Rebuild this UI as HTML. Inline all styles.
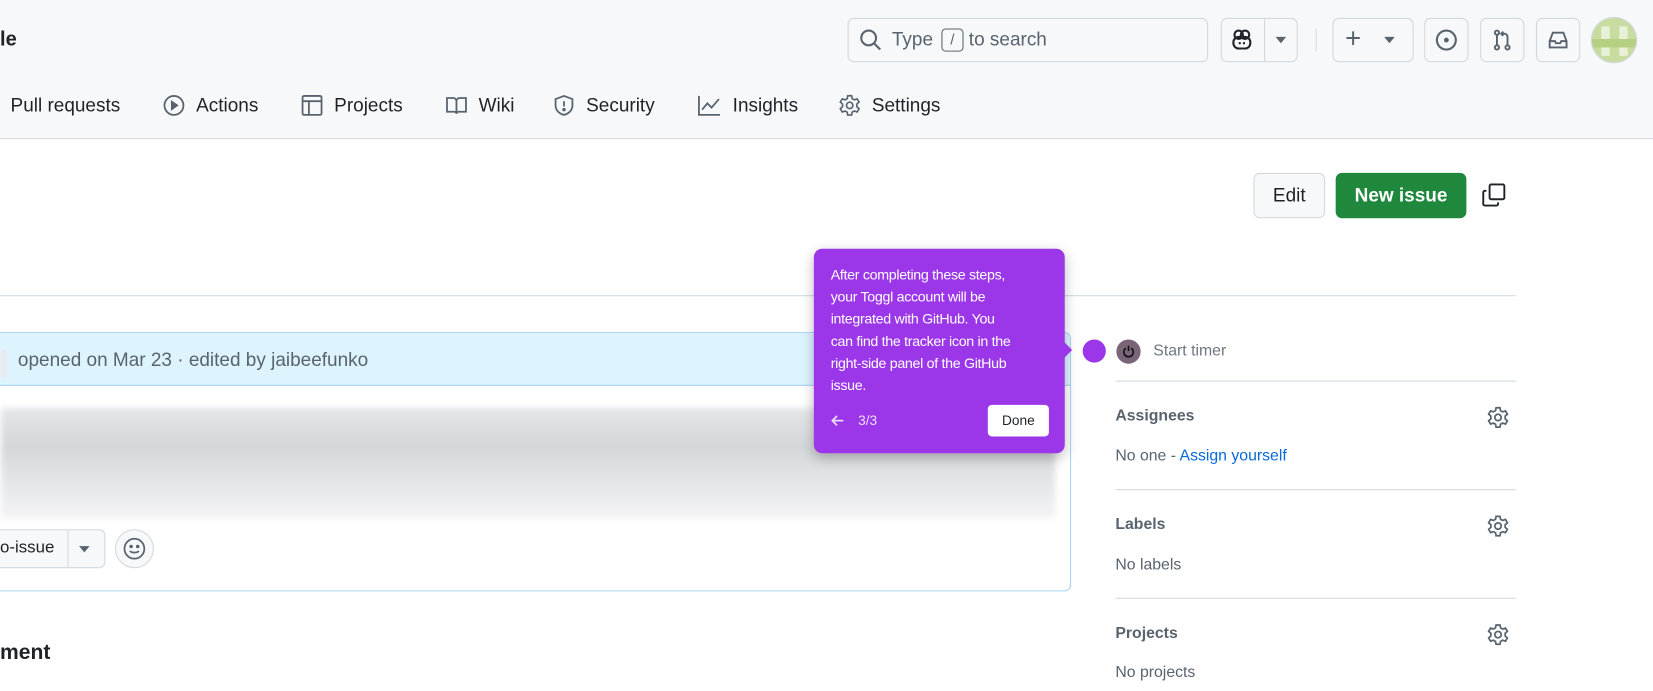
<!DOCTYPE html>
<html><head><meta charset="utf-8"><style>
*{box-sizing:border-box;margin:0;padding:0}
html,body{width:1653px;height:690px;overflow:hidden;background:#fff;font-family:"Liberation Sans",sans-serif;color:#1f2328}
#w{position:absolute;left:0;top:0;width:1568px;height:655px;transform:scale(1.0542);transform-origin:0 0}
.a{position:absolute}
.hdr{left:0;top:0;width:1568px;height:132px;background:#f6f8fa;border-bottom:1px solid #d1d9e0}
.btn{position:absolute;border:1px solid #d1d9e0;border-radius:6px;background:#f6f8fa}
.nav{position:absolute;top:89px;font-size:18px;color:#1f2328;display:flex;align-items:center;gap:10px}
svg{display:block}
.sb{position:absolute;left:1058px;width:380px;font-size:15px}
.sb h{font-weight:bold;color:#59636e}
.line{position:absolute;left:1058px;width:380px;height:1px;background:#d1d9e0}
</style></head><body><div id="w">
<div class="a hdr"></div>
<div class="a" style="left:0;top:27px;font-size:19px;font-weight:bold">le</div>
<div class="btn" style="left:804px;top:17px;width:342px;height:42px;background:#f6f8fa"></div>
<svg class="a" style="left:815px;top:27px" width="22" height="22" viewBox="0 0 22 22" fill="none" stroke="#59636e" stroke-width="2"><circle cx="9" cy="9" r="7"/><path d="M14 14l6 6"/></svg>
<div class="a" style="left:846px;top:27px;font-size:18px;color:#59636e">Type</div>
<div class="a" style="left:893px;top:27px;width:21px;height:22px;border:1.5px solid #59636e;border-radius:4px;font-size:14px;color:#59636e;text-align:center;line-height:19px">/</div>
<div class="a" style="left:919px;top:27px;font-size:18px;color:#59636e">to search</div>
<div class="btn" style="left:1158px;top:17px;width:73px;height:42px"></div>
<div class="a" style="left:1199px;top:17px;width:1px;height:42px;background:#d1d9e0"></div>
<svg class="a" style="left:1167px;top:27px" width="22" height="22" viewBox="0 0 22 22" fill="none" stroke="#1f2328" stroke-width="2"><rect x="3" y="8" width="16" height="11" rx="5"/><circle cx="8" cy="6" r="4"/><circle cx="14" cy="6" r="4"/><path d="M9 13v2M13 13v2"/></svg>
<div class="a" style="left:1210px;top:35px;border:5px solid transparent;border-top:6px solid #59636e"></div>
<div class="a" style="left:1248px;top:27px;width:1px;height:22px;background:#d1d9e0"></div>
<div class="btn" style="left:1264px;top:17px;width:77px;height:42px"></div>
<div class="a" style="left:1276px;top:21px;font-size:26px;color:#59636e">+</div>
<div class="a" style="left:1313px;top:35px;border:5px solid transparent;border-top:6px solid #59636e"></div>
<div class="btn" style="left:1351px;top:17px;width:42px;height:42px"></div>
<svg class="a" style="left:1361px;top:27px" width="22" height="22" viewBox="0 0 22 22" fill="none" stroke="#59636e" stroke-width="2"><circle cx="11" cy="11" r="9"/><circle cx="11" cy="11" r="1.3" fill="#59636e"/></svg>
<div class="btn" style="left:1404px;top:17px;width:42px;height:42px"></div>
<svg class="a" style="left:1414px;top:27px" width="22" height="22" viewBox="0 0 22 22" fill="none" stroke="#59636e" stroke-width="1.8"><circle cx="6" cy="4" r="2"/><circle cx="6" cy="18" r="2"/><circle cx="16" cy="18" r="2"/><path d="M6 6v10M16 16V8a3 3 0 0 0-3-3h-3M12 3l-2 2 2 2"/></svg>
<div class="btn" style="left:1457px;top:17px;width:42px;height:42px"></div>
<svg class="a" style="left:1467px;top:27px" width="22" height="22" viewBox="0 0 22 22" fill="none" stroke="#59636e" stroke-width="1.8"><path d="M3 12l3-8h10l3 8v6H3z M3 12h5l1 2h4l1-2h5"/></svg>
<div class="a" style="left:1509px;top:16px;width:44px;height:44px;border-radius:50%;overflow:hidden;border:1px solid #d1d9e0;background:#c8dca0">
<div class="a" style="left:9px;top:8px;width:8px;height:28px;background:#e8f0d8"></div><div class="a" style="left:26px;top:8px;width:8px;height:28px;background:#e8f0d8"></div><div class="a" style="left:0;top:20px;width:44px;height:8px;background:#b5d080"></div></div>
<div class="nav" style="left:10px;top:90px">Pull requests</div>
<div class="nav" style="left:154px"><svg width="22" height="22" viewBox="0 0 22 22" fill="none" stroke="#59636e" stroke-width="1.7"><circle cx="11" cy="11" r="9"/><path d="M9 7.5v7l5-3.5z" fill="#59636e"/></svg>Actions</div>
<div class="nav" style="left:285px"><svg width="22" height="22" viewBox="0 0 22 22" fill="none" stroke="#59636e" stroke-width="1.7"><rect x="2" y="2" width="18" height="18" rx="1.5"/><path d="M2 7h18M8 7v13"/></svg>Projects</div>
<div class="nav" style="left:422px"><svg width="22" height="22" viewBox="0 0 22 22" fill="none" stroke="#59636e" stroke-width="1.7"><path d="M2 4h6a3 3 0 0 1 3 3v12a2 2 0 0 0-2-2H2zM20 4h-6a3 3 0 0 0-3 3v12a2 2 0 0 1 2-2h7z"/></svg>Wiki</div>
<div class="nav" style="left:524px"><svg width="22" height="22" viewBox="0 0 22 22" fill="none" stroke="#59636e" stroke-width="1.7"><path d="M11 2l8 3v6c0 5-4 8-8 9-4-1-8-4-8-9V5z M11 7v5"/><circle cx="11" cy="15" r=".8" fill="#59636e"/></svg>Security</div>
<div class="nav" style="left:661px"><svg width="24" height="22" viewBox="0 0 24 22" fill="none" stroke="#59636e" stroke-width="1.7"><path d="M2 2v18h20M5 15l5-6 4 4 7-8"/></svg>Insights</div>
<div class="nav" style="left:795px"><svg width="22" height="22" viewBox="0 0 24 24" fill="none" stroke="#59636e" stroke-width="1.7"><path d="M10 2h4l.6 3 2.2 1.2 2.9-1 2 3.4-2.3 2v2.8l2.3 2-2 3.4-2.9-1-2.2 1.2-.6 3h-4l-.6-3-2.2-1.2-2.9 1-2-3.4 2.3-2v-2.8l-2.3-2 2-3.4 2.9 1L9.4 5z"/><circle cx="12" cy="12" r="3.3"/></svg>Settings</div>
<div class="btn" style="left:1189px;top:164px;width:68px;height:43px;font-size:18px;text-align:center;line-height:41px">Edit</div>
<div class="a" style="left:1267px;top:164px;width:124px;height:43px;background:#1f883d;border-radius:6px;color:#fff;font-size:18px;font-weight:bold;text-align:center;line-height:43px">New issue</div>
<svg class="a" style="left:1405px;top:173px" width="24" height="24" viewBox="0 0 24 24" fill="none" stroke="#1f2328" stroke-width="1.8"><rect x="8" y="2" width="14" height="14" rx="1.5"/><path d="M5 8H3.5A1.5 1.5 0 0 0 2 9.5v11A1.5 1.5 0 0 0 3.5 22h11a1.5 1.5 0 0 0 1.5-1.5V19"/></svg>
<div class="a" style="left:0;top:280px;width:1438px;height:1px;background:#d1d9e0"></div>
<div class="a" style="left:-10px;top:315px;width:1026px;height:246px;border:1px solid #a6d3f2;border-radius:6px;overflow:hidden">
<div class="a" style="left:0;top:0;width:1026px;height:50px;background:#ddf4ff;border-bottom:1px solid #a6d3f2"></div>
<div class="a" style="left:10px;top:16px;width:5px;height:26px;background:#e8eaed"></div>
<div class="a" style="left:26px;top:15px;font-size:18px;color:#59636e">opened on Mar 23 · edited by jaibeefunko</div>
<div class="a" style="left:10px;top:71px;width:1000px;height:105px;background:linear-gradient(180deg,#e4e6e8,#d4d7da 35%,#e6e7e9 70%,#f4f4f5);filter:blur(3px)"></div>
</div>
<div class="a" style="left:-10px;top:502px;width:110px;height:37px;border:1px solid #d1d9e0;border-radius:6px;background:#f6f8fa"></div>
<div class="a" style="left:0;top:511px;font-size:16px">o-issue</div>
<div class="a" style="left:64px;top:503px;width:1px;height:35px;background:#d1d9e0"></div>
<div class="a" style="left:75px;top:518px;border:5px solid transparent;border-top:6px solid #59636e"></div>
<div class="a" style="left:109px;top:502px;width:37px;height:37px;border:1px solid #d1d9e0;border-radius:50%;background:#f6f8fa"></div>
<svg class="a" style="left:116px;top:509px" width="23" height="23" viewBox="0 0 22 22" fill="none" stroke="#59636e" stroke-width="1.6"><circle cx="11" cy="11" r="9"/><path d="M7 13c1 2 7 2 8 0"/><circle cx="8" cy="9" r=".8" fill="#59636e"/><circle cx="14" cy="9" r=".8" fill="#59636e"/></svg>
<div class="a" style="left:0;top:608px;font-size:20px;font-weight:bold">ment</div>
<div class="a" style="left:1059px;top:322px;width:23px;height:23px;border-radius:50%;background:#7a6477"></div>
<svg class="a" style="left:1064px;top:327px" width="13" height="13" viewBox="0 0 13 13" fill="none" stroke="#111" stroke-width="1.5"><path d="M4 3.2a4.5 4.5 0 1 0 5 0M6.5 1v5"/></svg>
<div class="a" style="left:1094px;top:324px;font-size:15px;color:#6e7781">Start timer</div>
<div class="line" style="top:361px"></div>
<div class="sb a" style="top:386px"><h>Assignees</h></div>
<div class="a" style="left:1058px;top:424px;font-size:15px;color:#59636e">No one - <span style="color:#0969da">Assign yourself</span></div>
<div class="line" style="top:464px"></div>
<div class="sb a" style="top:489px"><h>Labels</h></div>
<div class="a" style="left:1058px;top:527px;font-size:15px;color:#59636e">No labels</div>
<div class="line" style="top:567px"></div>
<div class="sb a" style="top:592px"><h>Projects</h></div>
<div class="a" style="left:1058px;top:629px;font-size:15px;color:#59636e">No projects</div>
<svg class="a" style="left:1410px;top:385px" width="22" height="22" viewBox="0 0 24 24" fill="none" stroke="#59636e" stroke-width="1.8"><path d="M10 2h4l.6 3 2.2 1.2 2.9-1 2 3.4-2.3 2v2.8l2.3 2-2 3.4-2.9-1-2.2 1.2-.6 3h-4l-.6-3-2.2-1.2-2.9 1-2-3.4 2.3-2v-2.8l-2.3-2 2-3.4 2.9 1L9.4 5z"/><circle cx="12" cy="12" r="3.3"/></svg>
<svg class="a" style="left:1410px;top:488px" width="22" height="22" viewBox="0 0 24 24" fill="none" stroke="#59636e" stroke-width="1.8"><path d="M10 2h4l.6 3 2.2 1.2 2.9-1 2 3.4-2.3 2v2.8l2.3 2-2 3.4-2.9-1-2.2 1.2-.6 3h-4l-.6-3-2.2-1.2-2.9 1-2-3.4 2.3-2v-2.8l-2.3-2 2-3.4 2.9 1L9.4 5z"/><circle cx="12" cy="12" r="3.3"/></svg>
<svg class="a" style="left:1410px;top:591px" width="22" height="22" viewBox="0 0 24 24" fill="none" stroke="#59636e" stroke-width="1.8"><path d="M10 2h4l.6 3 2.2 1.2 2.9-1 2 3.4-2.3 2v2.8l2.3 2-2 3.4-2.9-1-2.2 1.2-.6 3h-4l-.6-3-2.2-1.2-2.9 1-2-3.4 2.3-2v-2.8l-2.3-2 2-3.4 2.9 1L9.4 5z"/><circle cx="12" cy="12" r="3.3"/></svg>
<div class="a" style="left:772px;top:236px;width:238px;height:194px;background:#9b37e8;border-radius:8px;box-shadow:0 4px 12px rgba(0,0,0,.25)"></div>
<div class="a" style="left:1008px;top:323px;border:9px solid transparent;border-left:9px solid #9b37e8;border-right:0"></div>
<div class="a" style="left:1027px;top:322px;width:22px;height:22px;border-radius:50%;background:#9b37e8"></div>
<div class="a" style="left:788px;top:250px;width:205px;font-size:13.5px;line-height:21px;color:#fff;letter-spacing:-0.3px">After completing these steps,<br>your Toggl account will be<br>integrated with GitHub. You<br>can find the tracker icon in the<br>right-side panel of the GitHub<br>issue.</div>
<svg class="a" style="left:788px;top:393px" width="13" height="12" viewBox="0 0 13 12" fill="none" stroke="#ecdcfb" stroke-width="1.6"><path d="M12 6H2M6 1.5L1.5 6 6 10.5"/></svg>
<div class="a" style="left:814px;top:391px;font-size:13px;color:#ecdcfb">3/3</div>
<div class="a" style="left:937px;top:384px;width:58px;height:30px;background:#fff;border-radius:4px;font-size:13px;text-align:center;line-height:30px;color:#1f2328">Done</div>
</div></body></html>
